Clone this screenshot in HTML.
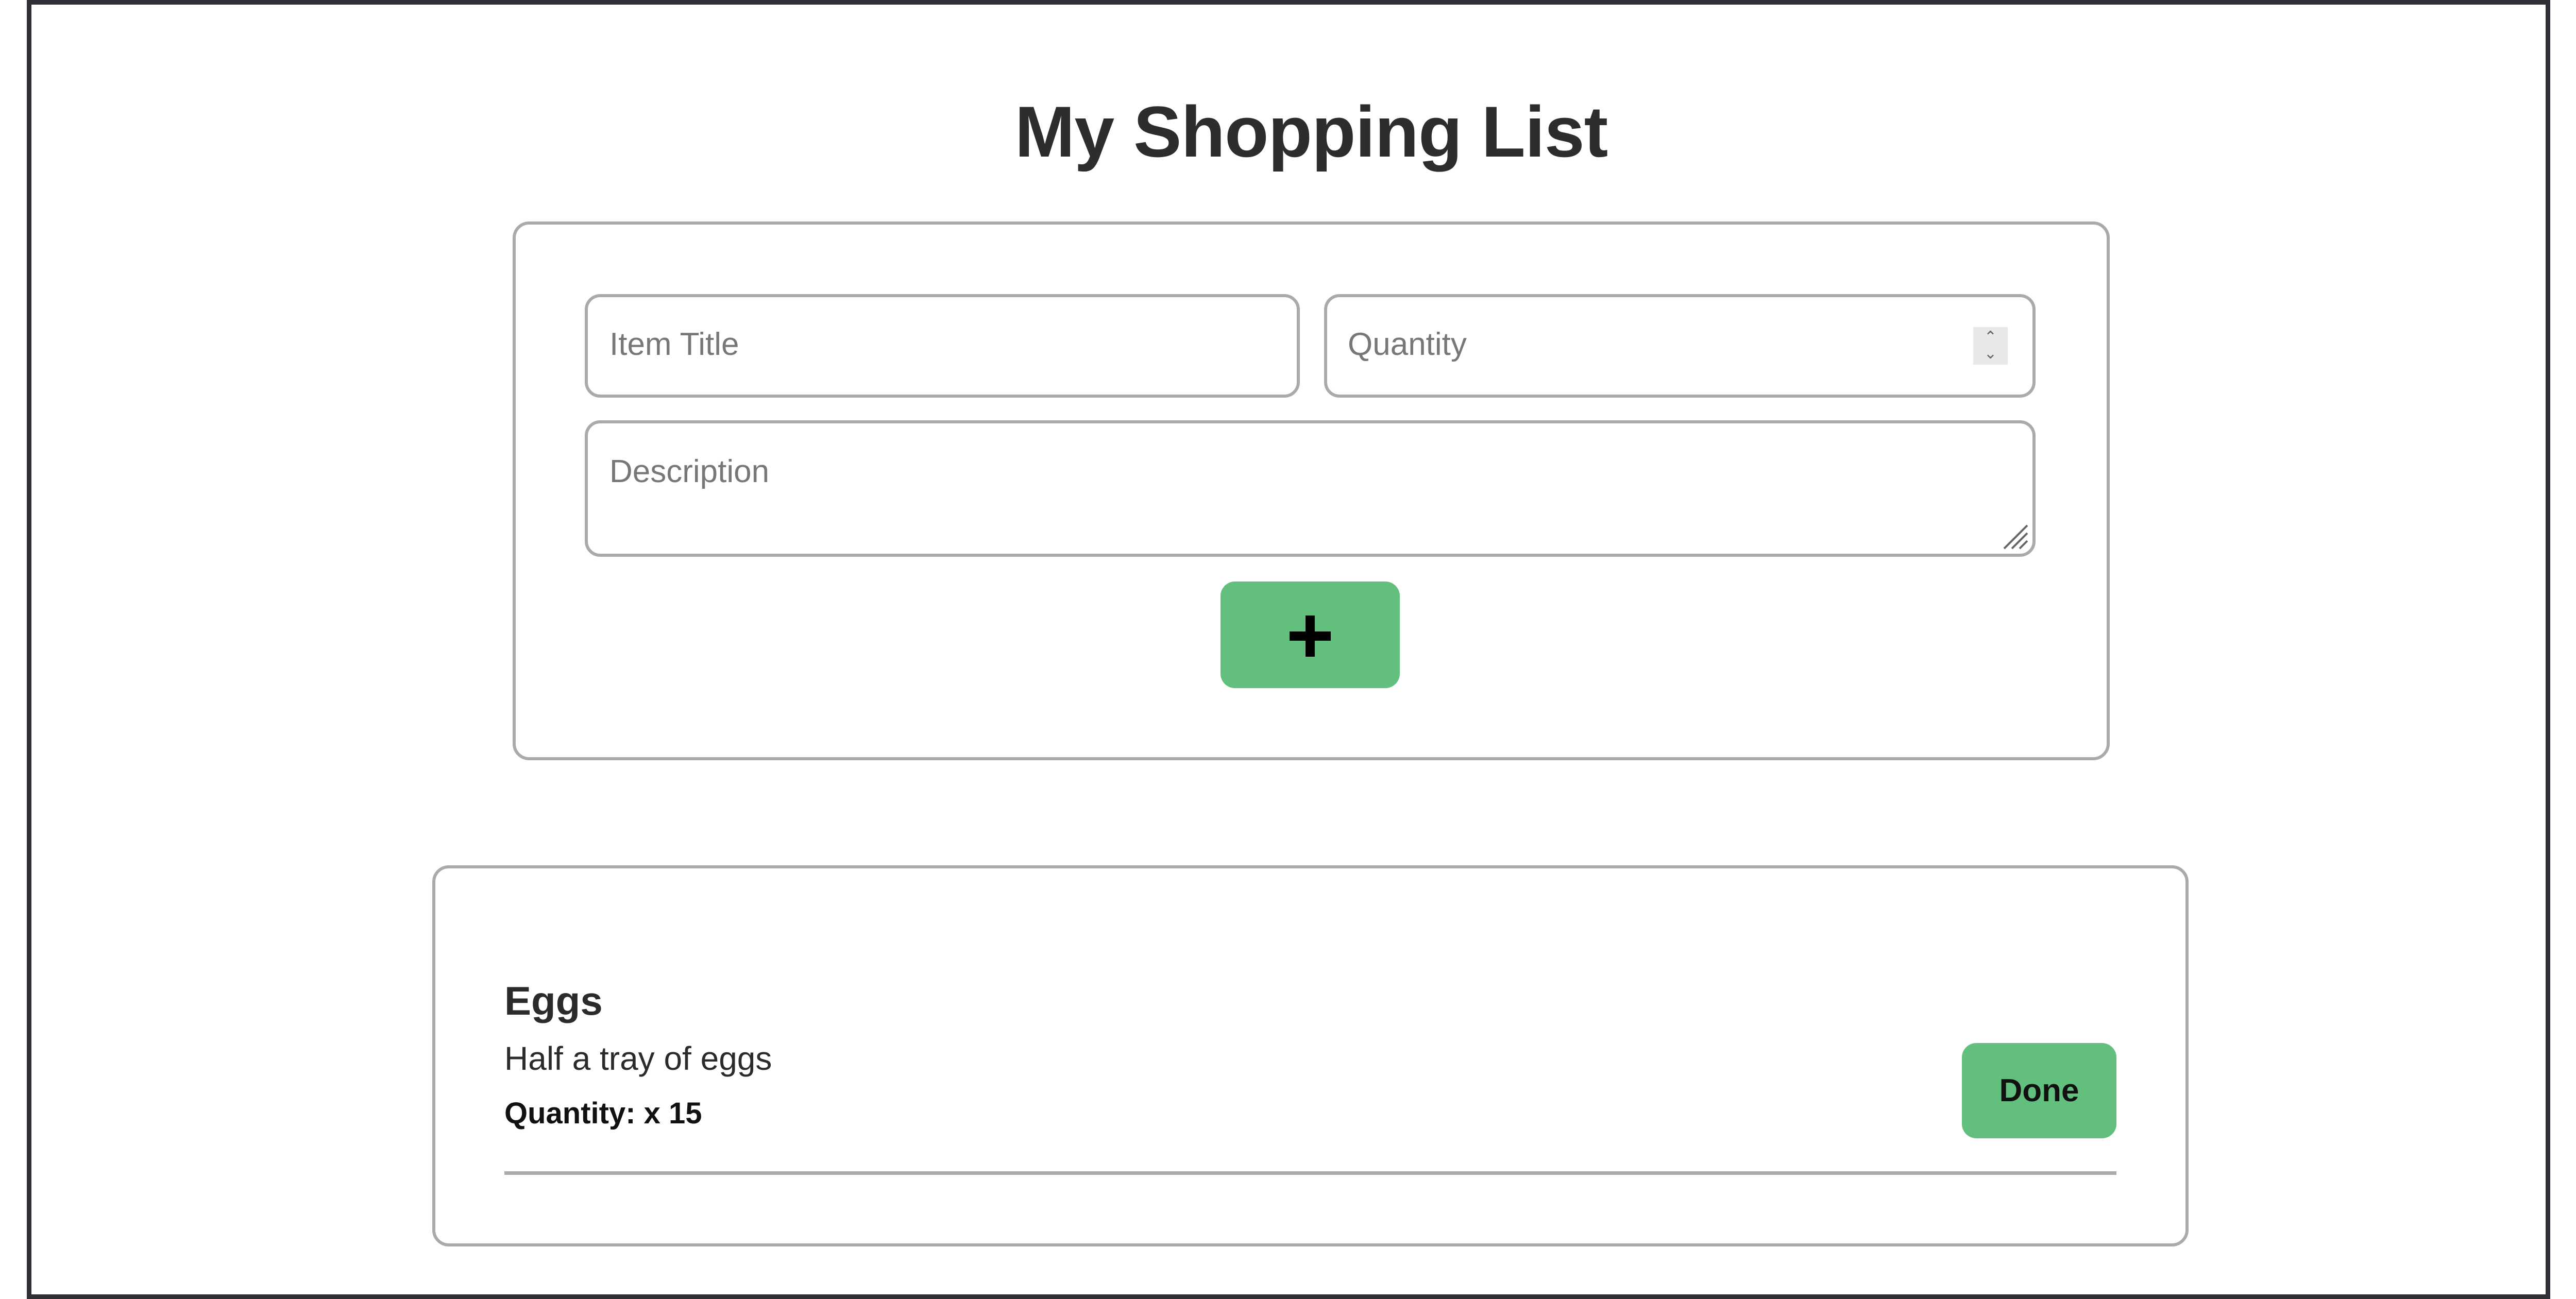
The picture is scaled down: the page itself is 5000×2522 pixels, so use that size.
<!DOCTYPE html>
<html><head><meta charset="utf-8"><style>
*{box-sizing:border-box;margin:0;padding:0}
html,body{width:5000px;height:2522px;background:#fff;overflow:hidden;font-family:"Liberation Sans",sans-serif;color:#2b2b2b}
.a{position:absolute}
.frame{left:52px;top:0;width:4898px;height:2522px;border:9px solid #2f2f36;border-top-width:9px}
.box{border:6px solid #aaa;border-radius:32px;background:#fff}
.ph{color:#777;font-size:62px;white-space:nowrap}
.title{left:45px;width:5000px;top:175px;text-align:center;font-weight:bold;font-size:140px;color:#2d2d2d;letter-spacing:-1px}
.green{background:#62bf7e;border-radius:28px}
</style></head><body>
<div class="a frame"></div>
<div class="a title">My Shopping List</div>
<div class="a box" style="left:995px;top:430px;width:3100px;height:1046px"></div>
<div class="a box" style="left:1135px;top:571px;width:1388px;height:201px;border-radius:30px"></div>
<div class="a ph" style="left:1183px;top:633px">Item Title</div>
<div class="a box" style="left:2570px;top:571px;width:1381px;height:201px;border-radius:30px"></div>
<div class="a ph" style="left:2616px;top:633px">Quantity</div>
<div class="a" style="left:3830px;top:635px;width:67px;height:73px;background:#e8e8e8;color:#666;font-size:30px;line-height:32px;text-align:center;padding-top:4px">&#8963;<br>&#8964;</div>
<div class="a box" style="left:1135px;top:816px;width:2816px;height:265px;border-radius:30px"></div>
<div class="a ph" style="left:1183px;top:880px">Description</div>
<svg class="a" style="left:3880px;top:1010px" width="60" height="60"><path d="M10 55 L55 10 M25 55 L55 25 M40 55 L55 40" stroke="#666" stroke-width="4"/></svg>
<div class="a green" style="left:2369px;top:1129px;width:348px;height:207px"></div>
<div class="a" style="left:2503px;top:1226px;width:80px;height:18px;background:#000"></div>
<div class="a" style="left:2534px;top:1195px;width:18px;height:80px;background:#000"></div>
<div class="a box" style="left:839px;top:1680px;width:3409px;height:740px"></div>
<div class="a" style="left:979px;top:1898px;font-size:78px;font-weight:bold">Eggs</div>
<div class="a" style="left:979px;top:2018px;font-size:64px">Half a tray of eggs</div>
<div class="a" style="left:979px;top:2128px;font-size:58px;font-weight:bold;color:#111">Quantity: x 15</div>
<div class="a green" style="left:3808px;top:2025px;width:300px;height:185px;font-size:62px;font-weight:bold;color:#111;text-align:center;line-height:185px">Done</div>
<div class="a" style="left:979px;top:2274px;width:3129px;height:7px;background:#aaa"></div>
</body></html>
